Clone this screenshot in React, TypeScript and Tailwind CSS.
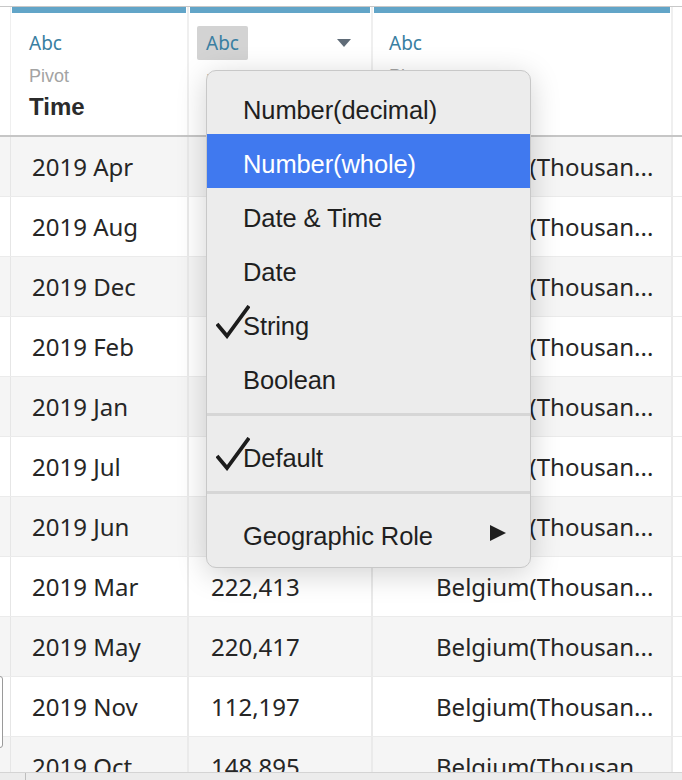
import React from "react";

// Tableau-style data grid with the "change data type" menu open on the second column

const rows = [
  { time: "2019 Apr", value: "231,870", name: "Belgium(Thousan..." },
  { time: "2019 Aug", value: "198,512", name: "Belgium(Thousan..." },
  { time: "2019 Dec", value: "104,355", name: "Belgium(Thousan..." },
  { time: "2019 Feb", value: "180,226", name: "Belgium(Thousan..." },
  { time: "2019 Jan", value: "125,901", name: "Belgium(Thousan..." },
  { time: "2019 Jul", value: "244,003", name: "Belgium(Thousan..." },
  { time: "2019 Jun", value: "237,648", name: "Belgium(Thousan..." },
  { time: "2019 Mar", value: "222,413", name: "Belgium(Thousan..." },
  { time: "2019 May", value: "220,417", name: "Belgium(Thousan..." },
  { time: "2019 Nov", value: "112,197", name: "Belgium(Thousan..." },
  { time: "2019 Oct", value: "148,895", name: "Belgium(Thousan..." },
];

function Check() {
  return (
    <svg className="absolute left-[9px] top-[9px] w-[34px] h-[34px]" viewBox="0 0 34 34" fill="none">
      <path d="M1 19 L11 31 L33 1" stroke="#1c1c1c" strokeWidth="3.8" strokeLinejoin="miter" />
    </svg>
  );
}

function MenuItem({ label, active, checked, arrow }: { label: string; active?: boolean; checked?: boolean; arrow?: boolean }) {
  return (
    <div
      className={
        "relative flex items-center h-[54px] pt-[6px] pl-[36px] pr-[24px] " +
        (active ? "bg-[#4079ef] text-white" : "text-[#1f1f1f]")
      }
    >
      {checked && <Check />}
      <span className="flex-1 tracking-[-0.1px]">{label}</span>
      {arrow && (
        <svg className="w-[16px] h-[16px] -mt-[6px]" viewBox="0 0 16 16">
          <path d="M0 0 L16 8 L0 16 Z" fill="#1f1f1f" />
        </svg>
      )}
    </div>
  );
}

function TypeMenu() {
  return (
    <div className="absolute left-[206px] top-[70px] w-[325px] rounded-[10px] border border-[#c8c8c8] bg-[#ececec] pt-[9px] pb-[7px] shadow-[0_6px_30px_rgba(0,0,0,0.18)] font-['Liberation_Sans',Arial,sans-serif] text-[25.5px]">
      <MenuItem label="Number(decimal)" />
      <MenuItem label="Number(whole)" active />
      <MenuItem label="Date & Time" />
      <MenuItem label="Date" />
      <MenuItem label="String" checked />
      <MenuItem label="Boolean" />
      <div className="mt-[9px] mb-[12px] h-[3px] bg-[#d6d6d6]" />
      <MenuItem label="Default" checked />
      <div className="mt-[9px] mb-[12px] h-[3px] bg-[#d6d6d6]" />
      <MenuItem label="Geographic Role" arrow />
    </div>
  );
}

function HeaderCell({ width, name, pad, selected }: { width: string; name: string; pad: string; selected?: boolean }) {
  return (
    <div className={width + " relative shrink-0 h-full border-r-2 border-[#efefef]"}>
      <div className="h-[6px] mx-[1px] bg-[#62a5c8]" />
      <div className={pad + " pt-[13px]"}>
        {selected ? (
          <div className="flex items-center justify-between pr-[20px]">
            <span className="rounded-[2px] bg-[#d3d3d3] px-[9px] py-[5px] font-['Noto_Sans',sans-serif] text-[19px] leading-[24px] text-[#3a7fa2]">
              Abc
            </span>
            <svg className="w-[14px] h-[8px]" viewBox="0 0 14 8">
              <path d="M0 0 L14 0 L7 8 Z" fill="#5f6b77" />
            </svg>
          </div>
        ) : (
          <div className="font-['Noto_Sans',sans-serif] text-[19px] leading-[24px] text-[#3a7fa2] pt-[5px]">Abc</div>
        )}
        <div className={(selected ? "pl-[9px] " : "") + "mt-[9px] font-['Liberation_Sans',Arial,sans-serif] text-[18px] leading-[24px] text-[#a3a3a3]"}>
          Pivot
        </div>
        <div className={(selected ? "pl-[9px] " : "") + "mt-[5px] font-['Liberation_Sans',Arial,sans-serif] font-bold text-[24px] leading-[28px] text-[#2b2b2b]"}>
          {name}
        </div>
      </div>
    </div>
  );
}

export default function App() {
  return (
    <div className="relative w-[682px] h-[780px] overflow-hidden bg-white">
      <div className="flex flex-col h-full">
        <div className="h-[6px] shrink-0" />
        <div className="flex h-[131px] shrink-0 border-t border-b-2 border-t-[#c8c8c8] border-b-[#c6c6c6]">
          <div className="w-[11px] shrink-0 border-r border-[#efefef]" />
          <HeaderCell width="w-[178px]" name="Time" pad="pl-[18px]" />
          <HeaderCell width="w-[184px]" name="Field Values" pad="pl-[8px]" selected />
          <HeaderCell width="w-[300px]" name="Field Names" pad="pl-[16px]" />
          <div className="flex-1" />
        </div>
        <div className="flex-1 overflow-hidden">
          {rows.map((r, i) => (
            <div
              key={r.time}
              className={
                "flex h-[60px] border-b border-[#ebebeb] font-['Noto_Sans',sans-serif] text-[24px] text-[#262626] " +
                (i % 2 === 0 ? "bg-[#f5f5f5]" : "bg-white")
              }
            >
              <div className="w-[11px] shrink-0 border-r border-[#e6e6e6]" />
              <div className="w-[178px] shrink-0 flex items-center pl-[21px] border-r-2 border-[#eaeaea]">{r.time}</div>
              <div className="w-[184px] shrink-0 flex items-center pl-[22px] border-r-2 border-[#eaeaea]">{r.value}</div>
              <div className="w-[300px] shrink-0 flex items-center pl-[63px] border-r-2 border-[#eaeaea] whitespace-nowrap">{r.name}</div>
              <div className="flex-1 bg-white" />
            </div>
          ))}
        </div>
        <div className="h-[8px] shrink-0 flex border-t border-[#d4d4d4] bg-[#ececec]">
          <div className="w-[26px] border-r border-[#bdbdbd]" />
        </div>
      </div>

      <div className="absolute left-[-8px] top-[676px] w-[11px] h-[72px] rounded-[3px] border border-[#9a9a9a] bg-white" />

      <TypeMenu />
    </div>
  );
}
